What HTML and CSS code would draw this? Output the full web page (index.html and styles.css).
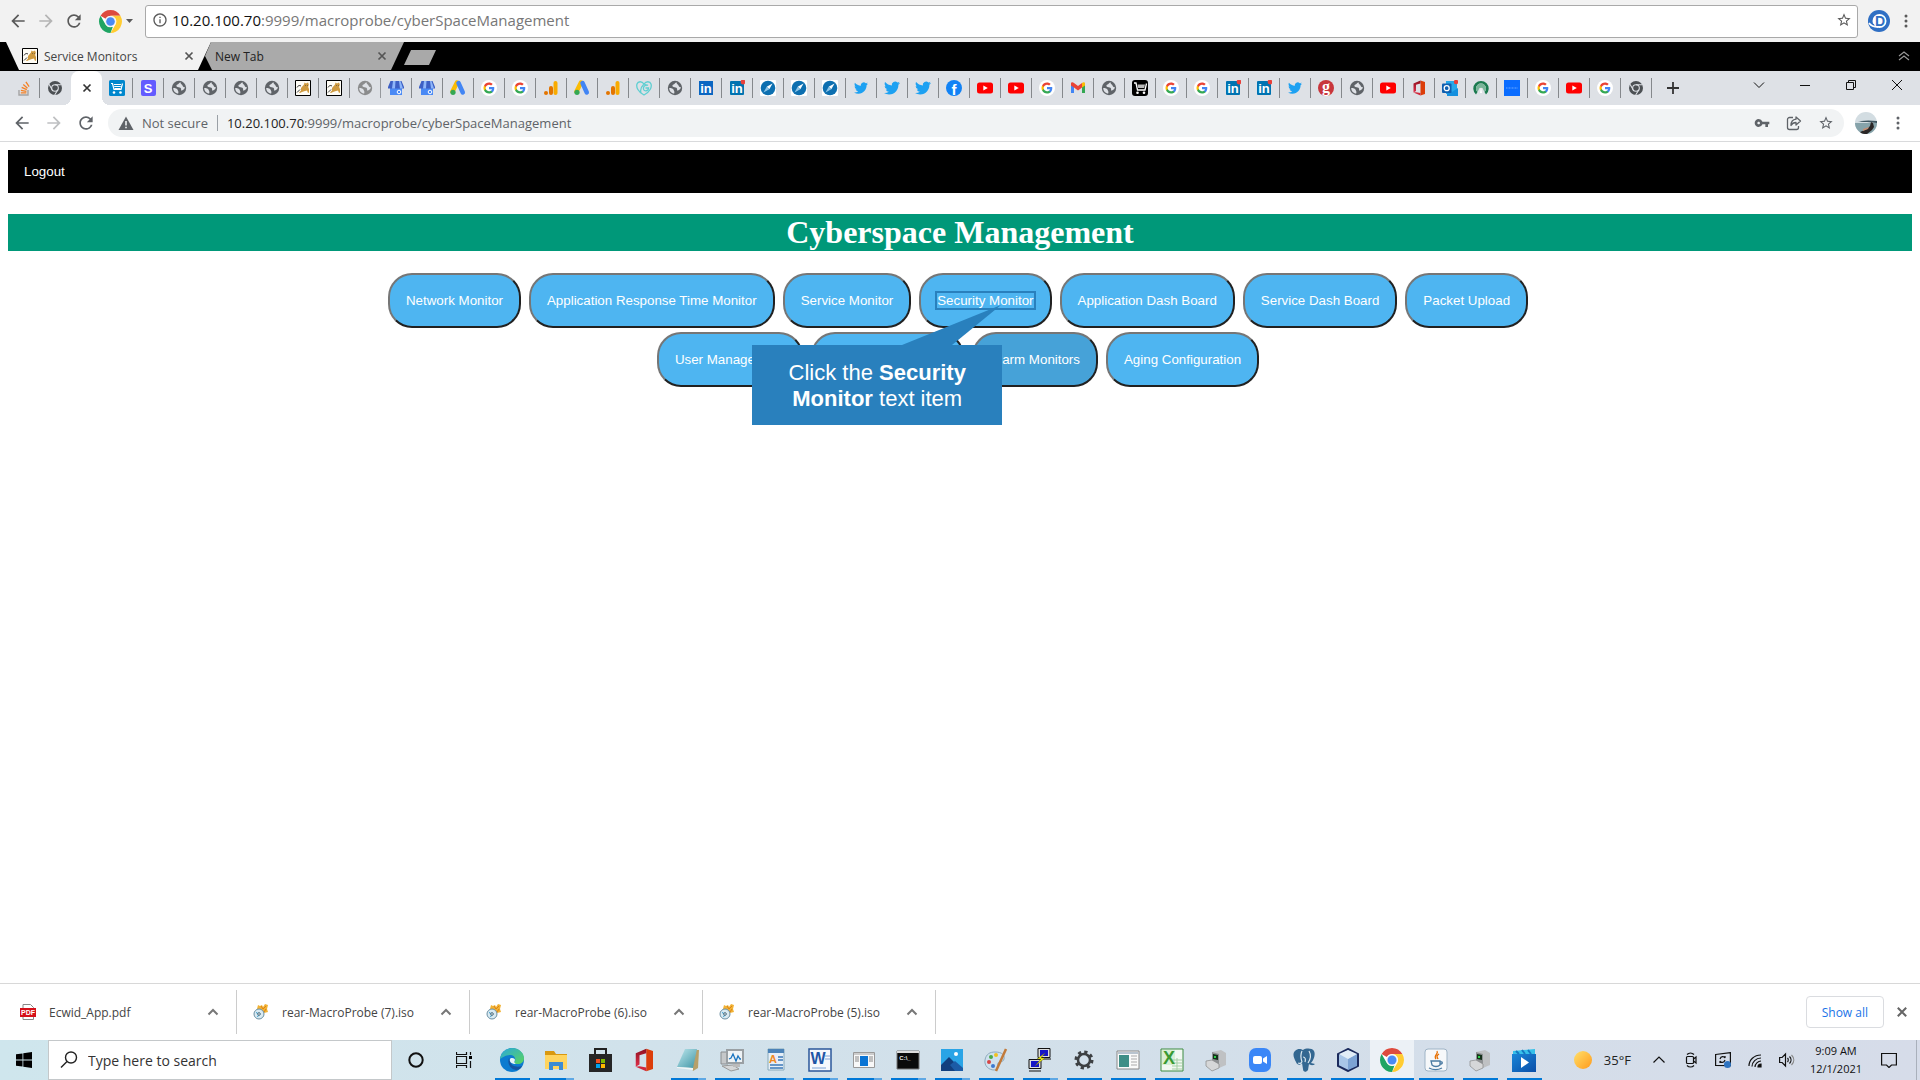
FILE: index.html
```
<!DOCTYPE html>
<html lang="en">
<head>
    <meta charset="UTF-8">
    <meta name="viewport" content="width=device-width, initial-scale=1.0">
    <title>Cyberspace Management</title>
    <link rel="stylesheet" href="styles.css">
</head>
<body>
    <!-- gradients -->
    <svg class="sprite" aria-hidden="true">
        <defs>
            <linearGradient id="g-edge" x1="0" y1="0" x2="1" y2="1"><stop offset="0" stop-color="#2aa7dd"/><stop offset="1" stop-color="#5bd65b"/></linearGradient>
            <linearGradient id="g-sun" x1="0" y1="0" x2="1" y2="1"><stop offset="0" stop-color="#ffe06a"/><stop offset="1" stop-color="#ff9a1c"/></linearGradient>
            <linearGradient id="g-office" x1="0" y1="0" x2="0" y2="1"><stop offset="0" stop-color="#8f1020"/><stop offset="1" stop-color="#e0304a"/></linearGradient>
            <linearGradient id="g-note" x1="0" y1="0" x2="1" y2="1"><stop offset="0" stop-color="#bfe8ee"/><stop offset="1" stop-color="#3f95a5"/></linearGradient>
            <linearGradient id="g-movie" x1="0" y1="0" x2="1" y2="1"><stop offset="0" stop-color="#1a86d8"/><stop offset="1" stop-color="#0a4ea8"/></linearGradient>
        </defs>
    </svg>
    <!-- shared icons -->
    <svg class="symbols" aria-hidden="true">
        <symbol id="i-back" viewBox="0 0 24 24"><path d="M20 11H7.83l5.59-5.59L12 4l-8 8 8 8 1.41-1.41L7.83 13H20v-2z"/></symbol>
        <symbol id="i-forward" viewBox="0 0 24 24"><path d="M12 4l-1.41 1.41L16.17 11H4v2h12.17l-5.58 5.59L12 20l8-8z"/></symbol>
        <symbol id="i-reload" viewBox="0 0 24 24"><path d="M17.65 6.35A7.958 7.958 0 0012 4c-4.42 0-7.99 3.58-7.99 8s3.57 8 7.99 8c3.73 0 6.84-2.55 7.73-6h-2.08A5.99 5.99 0 0112 18c-3.31 0-6-2.69-6-6s2.69-6 6-6c1.66 0 3.14.69 4.22 1.78L13 11h7V4l-2.35 2.35z"/></symbol>
        <symbol id="i-star" viewBox="0 0 24 24"><path d="M22 9.24l-7.19-.62L12 2 9.19 8.63 2 9.24l5.46 4.73L5.82 21 12 17.27 18.18 21l-1.63-7.03L22 9.24zM12 15.4l-3.76 2.27 1-4.28-3.32-2.88 4.38-.38L12 6.1l1.71 4.04 4.38.38-3.32 2.88 1 4.28L12 15.4z"/></symbol>
        <symbol id="i-info" viewBox="0 0 24 24"><path d="M11 7h2v2h-2zm0 4h2v6h-2zm1-9C6.48 2 2 6.48 2 12s4.480 10 10 10 10-4.480 10-10S17.520 2 12 2zm0 18c-4.410 0-8-3.590-8-8s3.590-8 8-8 8 3.590 8 8-3.590 8-8 8z"/></symbol>
        <symbol id="i-dots" viewBox="0 0 4 16"><circle cx="2" cy="3" r="1.500"/><circle cx="2" cy="8" r="1.500"/><circle cx="2" cy="13" r="1.500"/></symbol>
        <symbol id="i-close" viewBox="0 0 10 10"><path d="M1.500 1.500l7 7M8.500 1.500l-7 7" fill="none" stroke="currentColor" stroke-width="1.700"/></symbol>
        <symbol id="i-up" viewBox="0 0 12 12"><path d="M1.500 8.500L6 4l4.500 4.500" fill="none" stroke="currentColor" stroke-width="2"/></symbol>
        <symbol id="i-chrome" viewBox="0 0 24 24"><circle cx="12" cy="12" r="12" fill="#fff"/><path d="M12 0a12 12 0 0110.390 6H12a6 6 0 00-5.200 3L1.610 6A12 12 0 0112 0z" fill="#dd4b3e"/><path d="M22.390 6A12 12 0 0112 24l5.200-9A6 6 0 0012 6z" fill="#fc3"/><path d="M1.610 6L6.800 15A6 6 0 0012 18a6 6 0 002.500-.500L12 24A12 12 0 011.610 6z" fill="#1fa463"/><circle cx="12" cy="12" r="5.800" fill="#f4f4f4"/><circle cx="12" cy="12" r="4.500" fill="#4a8af4"/></symbol>
        <symbol id="i-chromegrey" viewBox="0 0 24 24"><circle cx="12" cy="12" r="10.500" fill="#4c5054"/><circle cx="12" cy="12" r="5" fill="none" stroke="#dee1e6" stroke-width="1.600"/><path d="M12 7h9.500M7.700 14.500L3 6.300M16.300 14.500L11.500 22.500" stroke="#dee1e6" stroke-width="1.600" fill="none"/></symbol>
        <symbol id="i-globe" viewBox="0 0 16 16"><circle cx="8" cy="8" r="7.200"/><path d="M9.500 2.200C8 2.500 8 4 6.500 4.500S5 6.500 6.500 7s3 0 3.500 1.500-.500 2 .500 2 3.500-1.500 3.300-3.500c-1.300.500-2-.500-2.300-1.500S9.500 4 9.500 2.200z" fill="#dee1e6"/><path d="M2.200 8c2 0 4 .500 4.500 2s1 1.500.500 3.600C4.500 13.500 2.200 11 2.200 8z" fill="#dee1e6"/></symbol>
        <symbol id="i-google" viewBox="0 0 32 32"><circle cx="16" cy="16" r="16" fill="#fff"/><g transform="translate(4 4)"><path d="M22.560 12.250c0-.780-.070-1.530-.200-2.250H12v4.260h5.920c-.260 1.370-1.040 2.530-2.210 3.310v2.770h3.570c2.080-1.920 3.280-4.740 3.280-8.090z" fill="#4285f4"/><path d="M12 23c2.970 0 5.460-.980 7.280-2.660l-3.570-2.770c-.980.660-2.230 1.060-3.710 1.060-2.860 0-5.290-1.930-6.160-4.530H2.180v2.840C3.990 20.530 7.700 23 12 23z" fill="#34a853"/><path d="M5.840 14.090c-.220-.660-.350-1.360-.350-2.090s.130-1.430.350-2.090V7.070H2.180C1.430 8.550 1 10.220 1 12s.430 3.450 1.180 4.930l2.850-2.220.810-.620z" fill="#fbbc05"/><path d="M12 5.380c1.620 0 3.060.560 4.210 1.640l3.150-3.150C17.450 2.090 14.970 1 12 1 7.700 1 3.990 3.470 2.180 7.070l3.660 2.840c.870-2.600 3.300-4.530 6.160-4.530z" fill="#ea4335"/></g></symbol>
        <symbol id="i-twitter" viewBox="0 0 24 24"><path fill="#1da1f2" d="M23.953 4.570a10 10 0 01-2.825.775 4.958 4.958 0 002.163-2.723c-.951.555-2.005.959-3.127 1.184a4.920 4.920 0 00-8.384 4.482C7.690 8.095 4.067 6.130 1.640 3.162a4.822 4.822 0 00-.666 2.475c0 1.710.870 3.213 2.188 4.096a4.904 4.904 0 01-2.228-.616v.060a4.923 4.923 0 003.946 4.827 4.996 4.996 0 01-2.212.085 4.936 4.936 0 004.604 3.417 9.867 9.867 0 01-6.102 2.105c-.390 0-.779-.023-1.170-.067a13.995 13.995 0 007.557 2.209c9.053 0 13.998-7.496 13.998-13.985 0-.210 0-.420-.015-.630A9.935 9.935 0 0024 4.590z"/></symbol>
        <symbol id="i-stack" viewBox="0 0 16 16"><path d="M3 10v5h9v-5" fill="none" stroke="#a5a4a4" stroke-width="1.400"/><path d="M4.800 12.800h5.600M4.900 10.300l5.500 1M5.700 7.400l5.100 2.300M7.300 4.600l4.200 3.600M9.900 1.800l3.200 4.800" stroke="#f48024" stroke-width="1.300"/></symbol>
        <symbol id="i-cartblue" viewBox="0 0 16 16"><rect width="16" height="16" rx="1.500" fill="#0087cd"/><path d="M2 3.500h1.500l1.500 6h7l1.500-6" fill="none" stroke="#fff" stroke-width="1.200"/><path d="M5 4h7v1H5zM5.200 6h6.600v1H5.200zM5.500 8h6v1h-6z" fill="#fff"/><circle cx="5" cy="12.500" r="1.300" fill="#fff"/><circle cx="11.500" cy="12.500" r="1.300" fill="#fff"/></symbol>
        <symbol id="i-cartblack" viewBox="0 0 16 16"><rect width="16" height="16" rx="3" fill="#000"/><path d="M2 3h2l1.500 7H13l1.500-6.500" fill="none" stroke="#fff" stroke-width="1.300"/><path d="M5.500 4.500H13l-.800 3.500H6.200z" fill="#bbb"/><circle cx="5.500" cy="12.700" r="1.300" fill="#fff"/><circle cx="12" cy="12.700" r="1.300" fill="#fff"/></symbol>
        <symbol id="i-stripe" viewBox="0 0 16 16"><rect x="1" width="15" height="16" rx="2" fill="#635bff"/><text x="8" y="13" class="mark" font-size="13" fill="#fff">S</text></symbol>
        <symbol id="i-tomcat" viewBox="0 0 16 16"><path d="M.500.500h15v15H.500z" fill="#fffdf6" stroke="#000"/><path d="M9 4.500l.500-2 1.500 1 2-1 .800 2-.600 2.500.800 2v3.500l-1 .500-1-2.500-2 .500-3 1-2 1-1-.500 2-2L6 8z" fill="#cf9a3f"/><path d="M2 7.500c1-2 2.500-2.500 4-1.500M2 12.500l3-3M10 5.500h.500M12 5.500h.500" stroke="#3b3b3b" fill="none"/></symbol>
        <symbol id="i-store" viewBox="0 0 16 16"><path d="M2 7h12v8H2z" fill="#4989f5"/><path d="M2.500 1h11L16 7v1.500H0V7z" fill="#3c5fc4"/><path d="M5 1h2.500L7 8.500H4zM11 1h1.500L15 8.500h-3z" fill="#8eb6f9"/><circle cx="11" cy="12" r="1.800" fill="none" stroke="#fff"/></symbol>
        <symbol id="i-ads" viewBox="0 0 16 16"><path d="M7 2.500L2.500 11.500" stroke="#fbbc04" stroke-width="4.500" stroke-linecap="round"/><path d="M8.500 3l4.300 9.500" stroke="#4285f4" stroke-width="4.500" stroke-linecap="round"/><circle cx="3" cy="12.300" r="2.600" fill="#34a853"/></symbol>
        <symbol id="i-analytics" viewBox="0 0 16 16"><rect x="10.500" y="1" width="4" height="14" rx="2" fill="#f9ab00"/><rect x="6" y="6" width="4" height="9" rx="2" fill="#e37400"/><circle cx="3" cy="13" r="2" fill="#e37400"/></symbol>
        <symbol id="i-godaddy" viewBox="0 0 16 16"><path d="M8 4C6 1 2 1 1 4s1 8 7 11c6-3 8-8 7-11S10 1 8 4zM8 4C5 7 4 10 5 13M9.500 8h3c0 3-4.500 4-5 1s3-5 4.500-3.500M8 4c2 1 1 0 2.500 2" fill="none" stroke="#5fcfd2" stroke-width="1.300"/></symbol>
        <symbol id="i-linkedin" viewBox="0 0 16 16"><rect x="1" y="1" width="14" height="14" fill="#0a66c2"/><text x="8" y="13" class="mark" font-size="13" fill="#fff">in</text></symbol>
        <symbol id="i-linkedindot" viewBox="0 0 16 16"><rect x="1" y="1" width="14" height="14" rx="1" fill="#0073b1"/><text x="8" y="13" class="mark" font-size="13" fill="#fff">in</text><circle cx="14" cy="2" r="2.400" fill="#e8403a"/></symbol>
        <symbol id="i-compass" viewBox="0 0 16 16"><rect width="16" height="16" rx="1" fill="#fff"/><circle cx="8" cy="8" r="7.300" fill="#0d6fb0"/><path d="M12.500 3.500L9.300 9.300 6.700 6.700z" fill="#fff"/><path d="M3.500 12.500l3.200-5.800 2.600 2.600z" fill="#8ec5e8"/></symbol>
        <symbol id="i-facebook" viewBox="0 0 16 16"><circle cx="8" cy="8" r="8" fill="#1182f5"/><text x="8" y="15" class="mark" font-size="15" fill="#fff">f</text></symbol>
        <symbol id="i-youtube" viewBox="0 0 16 16"><rect y="2.500" width="16" height="11" rx="2.500" fill="#f00"/><path d="M6.300 5.500v5l4.500-2.500z" fill="#fff"/></symbol>
        <symbol id="i-gmail" viewBox="0 0 16 16"><path d="M1 3.500V13h3V6z" fill="#4285f4"/><path d="M15 3.500V13h-3V6z" fill="#34a853"/><path d="M1 3.500c0-1.500 2-1.500 3-.500l4 3 4-3v4.500l-4 3-4-3-3-2z" fill="#ea4335"/><path d="M12 3c1-1 3-1 3 .500v2l-3 2z" fill="#fbbc04"/></symbol>
        <symbol id="i-redg" viewBox="0 0 16 16"><circle cx="8" cy="8" r="8" fill="#c8363c"/><text x="8" y="12" class="mark mark-serif" font-size="16" fill="#fff">g</text></symbol>
        <symbol id="i-office" viewBox="0 0 16 16"><path d="M9.500.500L14 2v12l-4.500 1.500z" fill="#dc3e0b"/><path d="M9.500.500L2.500 3.500v9L5 11V4.800l4.500-1.300z" fill="url(#g-office)"/><path d="M2.500 12.500l7 3V13L5 12.200z" fill="#d0283c"/></symbol>
        <symbol id="i-outlook" viewBox="0 0 16 16"><rect x="4" y="1" width="11" height="13" fill="#28a8ea"/><path d="M5 8l5 4 6-4v8H5z" fill="#1490df"/><rect x="0" y="3.500" width="9.500" height="9.500" rx="1" fill="#0f5fb0"/><circle cx="4.700" cy="8.200" r="2.500" fill="none" stroke="#fff" stroke-width="1.300"/><circle cx="14" cy="2" r="2.200" fill="#e8403a"/></symbol>
        <symbol id="i-gauge" viewBox="0 0 16 16"><path d="M3 14.500A7.700 7.700 0 1113 14.500L11.500 12a5 5 0 10-7 0z" fill="#1b7a4f"/><path d="M4.500 12a5 5 0 117 0L9.500 8H6.500z" fill="#79b598"/><path d="M8 7l1 6H7z" fill="#fff"/></symbol>
        <symbol id="i-bluebox" viewBox="0 0 16 16"><path d="M0 0h16v16H0z" fill="#0a6cff"/><path d="M2 8h12" stroke="#6aa6ff" stroke-dasharray="1 .500"/></symbol>
        <symbol id="i-pdf" viewBox="0 0 16 16"><path d="M3 .500h7.500L13.500 3.500v12H3z" fill="#fff" stroke="#888"/><rect y="4" width="16" height="9" fill="#d5101a"/><text x="8" y="11" class="mark" font-size="7" fill="#fff">PDF</text></symbol>
        <symbol id="i-iso" viewBox="0 0 16 16"><path d="M4 5l1-4 2 1 2-1 1 2 2-3 3 1-1 4 1 3-4 1-1 4-3-1z" fill="#f2b233"/><path d="M8 2l2 3 3-3M11 8l2-3" stroke="#d9821a" fill="none"/><circle cx="6" cy="10" r="5" fill="#d9eaf2" stroke="#6b8fa3"/><path d="M3 8.500l3 1.500-1.500 3" stroke="#2f9bd0" fill="none"/><circle cx="6" cy="10" r="1.300" fill="#fff" stroke="#467"/></symbol>
    </svg>

    <!-- outer browser bar -->
    <div class="bar bar-top">
        <div class="nav-btns nav-small">
            <button aria-label="Back"><svg><use href="#i-back"/></svg></button>
            <button aria-label="Forward" class="off"><svg><use href="#i-forward"/></svg></button>
            <button aria-label="Reload"><svg><use href="#i-reload"/></svg></button>
        </div>
        <button class="launcher" aria-label="Chrome">
            <svg class="chrome-logo"><use href="#i-chrome"/></svg>
            <svg class="caret" viewBox="0 0 7 4"><path d="M0 0h7L3.500 4z"/></svg>
        </button>
        <div class="address">
            <svg class="ico16"><use href="#i-info"/></svg>
            <label for="outerUrl">10.20.100.70</label>
            <input type="text" id="outerUrl" value=":9999/macroprobe/cyberSpaceManagement">
            <button aria-label="Bookmark"><svg class="ico16"><use href="#i-star"/></svg></button>
        </div>
        <svg class="d-logo" viewBox="0 0 22 22"><circle cx="11" cy="11" r="11" fill="#2f6fc4"/><circle cx="11.500" cy="11" r="7" fill="#fff"/><path d="M0 12l6 2 1 4-4 1z" fill="#2f6fc4"/><path d="M1 13c2 3 5 4 9 4" stroke="#fff" stroke-width="1.500" fill="none"/><text x="12" y="16" class="mark d-mark" fill="#2f6fc4">D</text></svg>
        <button class="menu" aria-label="Menu"><svg><use href="#i-dots"/></svg></button>
    </div>

    <div class="outer-tabs">
        <div class="outer-tab selected">
            <svg class="ico16"><use href="#i-tomcat"/></svg>
            <span>Service Monitors</span>
            <button aria-label="Close tab"><svg class="ico10"><use href="#i-close"/></svg></button>
        </div>
        <div class="outer-tab second">
            <span>New Tab</span>
            <button aria-label="Close tab"><svg class="ico10"><use href="#i-close"/></svg></button>
        </div>
        <button class="new-tab" aria-label="New tab"></button>
        <button class="collapse" aria-label="Collapse"><svg viewBox="0 0 12 10"><path d="M1 5l5-4 5 4M1 9l5-4 5 4" fill="none" stroke="#999" stroke-width="1.200"/></svg></button>
    </div>

    <!-- inner browser tabs -->
    <div class="tab-strip">
        <button class="tab"><svg><use href="#i-stack"/></svg></button>
        <button class="tab no-line"><svg><use href="#i-chromegrey"/></svg></button>
        <button class="tab active" aria-label="Close tab"><svg class="ico10"><use href="#i-close"/></svg></button>
        <button class="tab"><svg><use href="#i-cartblue"/></svg></button>
        <button class="tab"><svg><use href="#i-stripe"/></svg></button>
        <button class="tab"><svg><use href="#i-globe"/></svg></button>
        <button class="tab"><svg><use href="#i-globe"/></svg></button>
        <button class="tab"><svg><use href="#i-globe"/></svg></button>
        <button class="tab"><svg><use href="#i-globe"/></svg></button>
        <button class="tab"><svg><use href="#i-tomcat"/></svg></button>
        <button class="tab"><svg><use href="#i-tomcat"/></svg></button>
        <button class="tab faded"><svg><use href="#i-globe"/></svg></button>
        <button class="tab"><svg><use href="#i-store"/></svg></button>
        <button class="tab"><svg><use href="#i-store"/></svg></button>
        <button class="tab"><svg><use href="#i-ads"/></svg></button>
        <button class="tab"><svg><use href="#i-google"/></svg></button>
        <button class="tab"><svg><use href="#i-google"/></svg></button>
        <button class="tab"><svg><use href="#i-analytics"/></svg></button>
        <button class="tab"><svg><use href="#i-ads"/></svg></button>
        <button class="tab"><svg><use href="#i-analytics"/></svg></button>
        <button class="tab"><svg><use href="#i-godaddy"/></svg></button>
        <button class="tab"><svg><use href="#i-globe"/></svg></button>
        <button class="tab"><svg><use href="#i-linkedin"/></svg></button>
        <button class="tab"><svg><use href="#i-linkedindot"/></svg></button>
        <button class="tab"><svg><use href="#i-compass"/></svg></button>
        <button class="tab"><svg><use href="#i-compass"/></svg></button>
        <button class="tab"><svg><use href="#i-compass"/></svg></button>
        <button class="tab small"><svg><use href="#i-twitter"/></svg></button>
        <button class="tab"><svg><use href="#i-twitter"/></svg></button>
        <button class="tab"><svg><use href="#i-twitter"/></svg></button>
        <button class="tab"><svg><use href="#i-facebook"/></svg></button>
        <button class="tab"><svg><use href="#i-youtube"/></svg></button>
        <button class="tab"><svg><use href="#i-youtube"/></svg></button>
        <button class="tab"><svg><use href="#i-google"/></svg></button>
        <button class="tab"><svg><use href="#i-gmail"/></svg></button>
        <button class="tab"><svg><use href="#i-globe"/></svg></button>
        <button class="tab"><svg><use href="#i-cartblack"/></svg></button>
        <button class="tab"><svg><use href="#i-google"/></svg></button>
        <button class="tab"><svg><use href="#i-google"/></svg></button>
        <button class="tab"><svg><use href="#i-linkedindot"/></svg></button>
        <button class="tab"><svg><use href="#i-linkedindot"/></svg></button>
        <button class="tab small"><svg><use href="#i-twitter"/></svg></button>
        <button class="tab"><svg><use href="#i-redg"/></svg></button>
        <button class="tab"><svg><use href="#i-globe"/></svg></button>
        <button class="tab"><svg><use href="#i-youtube"/></svg></button>
        <button class="tab"><svg><use href="#i-office"/></svg></button>
        <button class="tab"><svg><use href="#i-outlook"/></svg></button>
        <button class="tab"><svg><use href="#i-gauge"/></svg></button>
        <button class="tab"><svg><use href="#i-bluebox"/></svg></button>
        <button class="tab"><svg><use href="#i-google"/></svg></button>
        <button class="tab"><svg><use href="#i-youtube"/></svg></button>
        <button class="tab"><svg><use href="#i-google"/></svg></button>
        <button class="tab"><svg><use href="#i-chromegrey"/></svg></button>
        <button class="add-tab" aria-label="New tab"><svg viewBox="0 0 12 12"><path d="M6 0v12M0 6h12" stroke="#333" stroke-width="1.800"/></svg></button>
        <div class="win-btns">
            <button aria-label="Search tabs"><svg viewBox="0 0 12 12"><path d="M1 3.500l5 5 5-5"/></svg></button>
            <button aria-label="Minimize"><svg viewBox="0 0 12 12"><path d="M1 6.500h10"/></svg></button>
            <button aria-label="Restore"><svg viewBox="0 0 12 12"><path d="M1.500 3.500h7v7h-7zM3.500 3V1.500h7v7H9"/></svg></button>
            <button aria-label="Close"><svg viewBox="0 0 12 12"><path d="M1 1l10 10M11 1L1 11"/></svg></button>
        </div>
    </div>

    <div class="bar bar-inner">
        <div class="nav-btns">
            <button aria-label="Back"><svg><use href="#i-back"/></svg></button>
            <button aria-label="Forward" class="off"><svg><use href="#i-forward"/></svg></button>
            <button aria-label="Reload"><svg><use href="#i-reload"/></svg></button>
        </div>
        <div class="omnibox">
            <svg class="ico16" viewBox="0 0 16 16"><path d="M8 1.500L15.500 15H.500z"/><path d="M7.200 6h1.600v4.500H7.200zM7.200 11.700h1.600v1.600H7.200z" fill="#f1f3f4"/></svg>
            <span class="secure">Not secure</span>
            <label for="innerUrl">10.20.100.70</label>
            <input type="text" id="innerUrl" value=":9999/macroprobe/cyberSpaceManagement">
            <button aria-label="Passwords"><svg class="ico16" viewBox="0 0 24 24"><path d="M12.650 10A5.990 5.990 0 007 6c-3.310 0-6 2.690-6 6s2.690 6 6 6a5.990 5.990 0 005.650-4H17v4h4v-4h2v-4H12.650zM7 14c-1.100 0-2-.900-2-2s.900-2 2-2 2 .900 2 2-.900 2-2 2z"/></svg></button>
            <button aria-label="Share"><svg class="ico16" viewBox="0 0 16 16"><path d="M7 2.500H3.500a2 2 0 00-2 2v8a2 2 0 002 2h7a2 2 0 002-2V11M10 2l4.500 4L10 10V7.500c-2.500 0-4 1-5 3 0-3.500 2-6 5-6.300z" fill="none" stroke="#5f6368" stroke-width="1.300" stroke-linejoin="round"/></svg></button>
            <button aria-label="Bookmark"><svg class="ico16"><use href="#i-star"/></svg></button>
        </div>
        <button class="avatar" aria-label="Profile"><svg viewBox="0 0 22 22"><circle cx="11" cy="11" r="11" fill="#d3dde2"/><path d="M0 11h22a11 11 0 01-22 0z" fill="#86a3aa"/><path d="M0 11c4-2 8-1 12-1l10 1V9C14 8 6 8 0 11z" fill="#3e5560"/><path d="M5 20l7-3 3-3 1-4 2 1 1 4-2 3-5 4c-3 0-5 0-7-2z" fill="#2a2626"/><path d="M8 17l6-2-1 2-5 2z" fill="#c28e73"/></svg></button>
        <button class="menu" aria-label="Menu"><svg><use href="#i-dots"/></svg></button>
    </div>

    <!-- page -->
    <main class="page">
        <div class="topnav">
            <button class="logout">Logout</button>
        </div>
        <h1>Cyberspace Management</h1>
        <div class="monitors">
            <button class="button">Network Monitor</button>
            <button class="button">Application Response Time Monitor</button>
            <button class="button">Service Monitor</button>
            <div class="step">
                <button class="button"><span class="target">Security Monitor</span></button>
                <div class="callout">
                    <svg class="pointer" viewBox="0 0 250 40"><path d="M150 40L249 0l-49 40z"/></svg>
                    <p>Click the <b>Security Monitor</b> text item</p>
                </div>
            </div>
            <button class="button">Application Dash Board</button>
            <button class="button">Service Dash Board</button>
            <button class="button">Packet Upload</button>
            <button class="button">User Management</button>
            <button class="button">Alarm Configuration</button>
            <button class="button hovered">Alarm Monitors</button>
            <button class="button">Aging Configuration</button>
        </div>
    </main>

    <!-- downloads -->
    <div class="downloads">
        <div class="download"><svg class="ico16"><use href="#i-pdf"/></svg><span>Ecwid_App.pdf</span><button aria-label="Options"><svg><use href="#i-up"/></svg></button></div>
        <div class="download"><svg class="ico16"><use href="#i-iso"/></svg><span>rear-MacroProbe (7).iso</span><button aria-label="Options"><svg><use href="#i-up"/></svg></button></div>
        <div class="download"><svg class="ico16"><use href="#i-iso"/></svg><span>rear-MacroProbe (6).iso</span><button aria-label="Options"><svg><use href="#i-up"/></svg></button></div>
        <div class="download"><svg class="ico16"><use href="#i-iso"/></svg><span>rear-MacroProbe (5).iso</span><button aria-label="Options"><svg><use href="#i-up"/></svg></button></div>
        <button class="show-all">Show all</button>
        <button class="close-downloads" aria-label="Close"><svg viewBox="0 0 10 10"><use href="#i-close"/></svg></button>
    </div>

    <!-- taskbar -->
    <div class="taskbar">
        <button class="start" aria-label="Start"><svg viewBox="0 0 16 16"><path d="M0 2.300l6.500-.900v6.200H0zM7.300 1.300L16 0v7.600H7.300zM0 8.400h6.500v6.200L0 13.700zM7.300 8.400H16V16l-8.700-1.300z"/></svg></button>
        <div class="search">
            <svg viewBox="0 0 18 18"><circle cx="11" cy="6.500" r="5.500"/><path d="M7 10.500L1 16.500"/></svg>
            <input type="text" aria-label="Search" placeholder="Type here to search">
        </div>
        <button class="sys" aria-label="Cortana"><svg viewBox="0 0 16 16"><circle cx="8" cy="8" r="6.700" fill="none" stroke="#111" stroke-width="2"/></svg></button>
        <button class="sys" aria-label="Task view"><svg viewBox="0 0 16 16"><path d="M.500 0v2.500h10V0M.500 4.500h10v7H.500zM.500 16v-2.500h10V16M14.500 0v3M14.500 9v7" fill="none" stroke="#111" stroke-width="1.200"/><path d="M13 4h3v3h-3z"/></svg></button>
        <div class="apps">
            <button class="app run"><svg viewBox="0 0 24 24"><circle cx="12" cy="12" r="12" fill="#0c7bd0"/><path d="M0 11C1 4 6 0 12 0c7 0 12 5 12 10 0 4-3 6-6 6-4 0-5-1-3-3 1-3-1-6-5-6-5 0-8 3-10 4z" fill="url(#g-edge)"/><path d="M9 10c-2 5 1 11 7 12 3 0 5-2 6-4-3 1-7 1-10-1-2-2-2-5-3-7z" fill="#1554a0"/><path d="M10 11c1-2 5-1 5 1-1 2-1 3 1 4-4 0-7-2-6-5z" fill="#e5f3f8"/></svg></button>
            <button class="app run many"><svg viewBox="0 0 24 24"><path d="M1 3h9l2 3h11v4H1z" fill="#d9980f"/><path d="M1 7h22v14H1z" fill="#ffd45e"/><path d="M5 14h14v8h-4v-4H9v4H5z" fill="#3c8cd4"/></svg></button>
            <button class="app"><svg viewBox="0 0 24 24"><path d="M7 7V1h11v6" fill="none" stroke="#222" stroke-width="2"/><path d="M1 6h23v18H1z" fill="#262626"/><path d="M8 11h4v4H8z" fill="#f25022"/><path d="M13 11h4v4h-4z" fill="#7fba00"/><path d="M8 16h4v4H8z" fill="#00a4ef"/><path d="M13 16h4v4h-4z" fill="#ffb900"/></svg></button>
            <button class="app"><svg viewBox="0 0 16 16"><use href="#i-office"/></svg></button>
            <button class="app run many"><svg viewBox="0 0 24 24"><path d="M9 2h14l-1 18-5 3z" fill="#b7a069"/><path d="M9 1h12l-4 19L1 19z" fill="url(#g-note)"/><path d="M1 19l16 1v2L1 20z" fill="#f2f6f6"/></svg></button>
            <button class="app run"><svg viewBox="0 0 24 24"><path d="M1 4h7v12H1z" fill="#c5c8ca" stroke="#8a8d90"/><path d="M7 2h16v13H7z" fill="#eef3f6" stroke="#9aa0a4" stroke-width="2"/><path d="M9 11l2-1 2-4 3 7 2-5 2 3h1" fill="none" stroke="#1b75c0" stroke-width="1.300"/><path d="M2 18l11-1 6 4-8 2z" fill="#d5d7d8" stroke="#999"/><path d="M13 16h7v3h-7z" fill="#bbb"/></svg></button>
            <button class="app run many"><svg viewBox="0 0 24 24"><path d="M4 1h16v21H4z" fill="#e6eff8" stroke="#8ab"/><path d="M4 1h16v4H4z" fill="#4c83b8"/><path d="M14 9h5M14 12h5M6 17h13M6 20h13" stroke="#3d7ab8" stroke-width="1.500"/><text x="9" y="15" class="mark" font-size="11" fill="#f08a24">A</text></svg></button>
            <button class="app run many"><svg viewBox="0 0 24 24"><path d="M1 1h22v22H1z" fill="#f5f8fc" stroke="#2b579a" stroke-width="1.500"/><path d="M17 8h5M17 11h5M4 20h14" stroke="#7fa4d6"/><text x="10" y="16" class="mark" font-size="16" fill="#1f55a5">W</text></svg></button>
            <button class="app run many"><svg viewBox="0 0 24 24"><path d="M1.500 4.500h21v15h-21z" fill="#f8f8f8" stroke="#999"/><path d="M2 5h20v2H2z" fill="#ccc"/><path d="M8 8h8v10H8z" fill="#0a74d4"/><path d="M3 9h4M3 11h4M3 13h4M17 9h4M17 11h4M17 13h4" stroke="#888"/></svg></button>
            <button class="app run many"><svg viewBox="0 0 24 24"><path d="M1 3h22v18H1z" fill="#0a0a0a" stroke="#777"/><path d="M1 3h22v2H1z" fill="#ddd"/><text x="9" y="12" class="mark" font-size="6" fill="#eee">C:\_</text></svg></button>
            <button class="app run many"><svg viewBox="0 0 24 24"><path d="M1 1h22v22H1z" fill="#2aa4e6"/><path d="M1 17l8-8 14 14H1z" fill="#123f7e"/><path d="M10 17l5-4 8 7v3H15z" fill="#1c5ba6"/><circle cx="16" cy="6" r="2" fill="#fff"/></svg></button>
            <button class="app run"><svg viewBox="0 0 24 24"><path d="M11 4c7 0 10 3 9 7s-5 2-6 4 1 7-4 7S0 18 1 12s5-8 10-8z" fill="#cfe1ee" stroke="#8ca9bd"/><circle cx="7" cy="9" r="2" fill="#4aa84a"/><circle cx="12" cy="7" r="2" fill="#f0c020"/><circle cx="5" cy="14" r="2" fill="#d64545"/><circle cx="9" cy="18" r="2" fill="#3d7ad0"/><path d="M22 1L12 23" stroke="#c27a3a" stroke-width="2.500"/></svg></button>
            <button class="app run many"><svg viewBox="0 0 24 24"><path d="M11 1h10v8H11zM2 12h10v8H2z" fill="#1414c8" stroke="#ddd" stroke-width="2"/><path d="M10 .500h12v9H10zM1 11.500h12v9H1zM11 11h12M1 23h12" fill="none" stroke="#111"/><path d="M17 5l-8 6h4l-6 7 10-8h-4z" fill="#ff0" stroke="#554" stroke-width=".500"/></svg></button>
            <button class="app run"><svg viewBox="0 0 24 24"><circle cx="12" cy="12" r="6" fill="none" stroke="#3d4043" stroke-width="2.500"/><circle cx="12" cy="12" r="8" fill="none" stroke="#3d4043" stroke-width="3" stroke-dasharray="3.200 3.083"/></svg></button>
            <button class="app run"><svg viewBox="0 0 24 24"><path d="M1 3h22v18H1z" fill="#fafafa" stroke="#888"/><path d="M2 4h20v2H2z" fill="#b9c4cf"/><path d="M3 7h10v12H3z" fill="#3f8e86"/><path d="M15 8h6M15 11h6M15 14h6M15 17h6" stroke="#aaa"/></svg></button>
            <button class="app run"><svg viewBox="0 0 24 24"><path d="M1 1h22v22H1z" fill="#f2f8f2" stroke="#3d8b40"/><path d="M2 2h13v15H2z" fill="#d8efd4"/><path d="M12 12h10M12 15h10M12 18h10M12 21h10M17 10v12" stroke="#a5cfa5"/><text x="9" y="16" class="mark" font-size="18" fill="#3a9a32">X</text></svg></button>
            <button class="app run"><svg viewBox="0 0 24 24"><path d="M8 4l9-2 5 3v12l-7 3-7-2z" fill="#bfc1c3"/><path d="M8 4l7 2v14l-7-2z" fill="#8e9193"/><path d="M9 6l5 1v5l-5-1z" fill="#15301a"/><path d="M10 8h2v2h-2z" fill="#2ed04a"/><path d="M2 13l6-1 7 4v4l-7 3-6-5z" fill="#d6d7d8" stroke="#888" stroke-width=".700"/></svg></button>
            <button class="app run"><svg viewBox="0 0 24 24"><rect x="1" width="22" height="24" rx="7" fill="#3b87f7"/><rect x="5" y="8" width="9" height="8" rx="2" fill="#fff"/><path d="M15 10.500L19 8v8l-4-2.500z" fill="#fff"/></svg></button>
            <button class="app run"><svg viewBox="0 0 24 24"><path d="M3 3c3-3 6-2 8-1 3-2 9-2 11 1 2 4-1 10-3 12l4 1c-2 2-5 1-6 0l-1 6c-2 3-5 2-5-1l-1-6c-2 3-5 2-6-1C2 10 0 6 3 3z" fill="#336791"/><path d="M10 3c-2 4-1 8 0 11M17 3c3 5 1 9-1 12M11 9c2 0 3 2 2 5M6 15c2 1 4 0 4-2" fill="none" stroke="#dce8f0" stroke-width="1.200"/></svg></button>
            <button class="app run"><svg viewBox="0 0 24 24"><path d="M12 1l10 5v12l-10 5-10-5V6z" fill="#a9c6e8" stroke="#1b2a5c" stroke-width="2"/><path d="M12 11l9-5v12l-9 4z" fill="#7da3d4"/><path d="M3 6l9-4 9 4-9 5z" fill="#e2edf7"/></svg></button>
            <button class="app run current"><svg viewBox="0 0 24 24"><use href="#i-chrome"/></svg></button>
            <button class="app run"><svg viewBox="0 0 24 24"><rect x="1" y="1" width="22" height="22" rx="3" fill="#f6f8fa" stroke="#9fb4c6"/><path d="M13 3c2 3-4 4-1 8M15 6c-3 2-2 3-1 5" fill="none" stroke="#e76f00" stroke-width="1.300"/><path d="M7 13h9v4c-2 2-6 2-8 0zM16 14c3-1 3 2 0 2M5 20c4 2 9 2 13 0" fill="none" stroke="#4b7ba3" stroke-width="1.300"/></svg></button>
            <button class="app run"><svg viewBox="0 0 24 24"><path d="M8 4l9-2 5 3v12l-7 3-7-2z" fill="#bfc1c3"/><path d="M8 4l7 2v14l-7-2z" fill="#8e9193"/><path d="M9 6l5 1v5l-5-1z" fill="#15301a"/><path d="M10 8h2v2h-2z" fill="#2ed04a"/><path d="M2 13l6-1 7 4v4l-7 3-6-5z" fill="#d6d7d8" stroke="#888" stroke-width=".700"/></svg></button>
            <button class="app run"><svg viewBox="0 0 24 24"><path d="M1 3l22-2v5H1z" fill="#35c0ea"/><path d="M4 3l3 3M10 2l3 4M16 2l3 4" stroke="#1578c2" stroke-width="2"/><path d="M0 6h24v18H0z" fill="url(#g-movie)"/><path d="M9 9v11l8-5.500z" fill="#fff"/></svg></button>
        </div>
        <div class="tray">
            <button class="weather"><svg viewBox="0 0 18 18"><circle cx="9" cy="9" r="9" fill="url(#g-sun)"/></svg><span>35°F</span></button>
            <button class="tray-btn" aria-label="Show hidden icons"><svg viewBox="0 0 16 16"><path d="M2.500 10.500L8 5l5.500 5.500"/></svg></button>
            <button class="tray-btn" aria-label="Meet now"><svg viewBox="0 0 16 16"><rect x="3.500" y="4.500" width="7" height="7" rx="1"/><path d="M10.500 7l2.500-2v6l-2.500-2M4 2.500C6 .500 9 .500 11 2.500M4 13.500c2 2 5 2 7 0"/></svg></button>
            <button class="tray-btn" aria-label="Updates"><svg viewBox="0 0 16 16"><path d="M.600 2.500L15.400.600v13L.600 13.400z"/><path d="M5 7c1-3 4-3 5-1V4M10 8c-1 3-4 3-5 1v2"/><circle cx="12.500" cy="12.500" r="3.500" fill="#2f74c0" stroke="none"/></svg></button>
            <button class="tray-btn" aria-label="Network"><svg viewBox="0 0 16 16"><path d="M2 14C2 8 7 3 14 3M5 14.500C5 10 9 6 14 6M8 15c0-3 3-6 6-6"/><path d="M11 15a3 3 0 013-3v3z" fill="#111"/></svg></button>
            <button class="tray-btn" aria-label="Volume"><svg viewBox="0 0 16 16"><path d="M.600 5.500h2.500L6.500 2v12L3.100 10.500H.600zM8.500 6c1 1 1 3 0 4M10.500 4.500c2 2 2 5 0 7"/><path d="M12.500 3c3 3 3 7 0 10" stroke="#888"/></svg></button>
            <button class="clock"><span>9:09 AM</span><span>12/1/2021</span></button>
            <button class="tray-btn notes" aria-label="Notifications"><svg viewBox="0 0 16 16"><path d="M.600 1.500h14.800v11.500H10.500L8 15.500 5.500 13H.600z"/></svg></button>
        </div>
    </div>
</body>
</html>
```
FILE: styles.css
```
* {
    box-sizing: border-box;
}
body {
    margin: 0;
    min-height: 100vh;
    display: flex;
    flex-direction: column;
    background: white;
    font-family: "Open Sans", "Noto Sans", sans-serif;
    color: #222;
}
svg {
    display: block;
    flex: none;
}
.sprite {
    position: absolute;
    width: 0;
    height: 0;
}
.symbols {
    display: none;
}
.mark {
    font-family: "Liberation Sans", Arial, sans-serif;
    font-weight: bold;
    text-anchor: middle;
}
.mark-serif {
    font-family: "Liberation Serif", serif;
}
.d-mark {
    font-size: 14px;
}
.ico16 {
    width: 16px;
    height: 16px;
}
.ico10 {
    width: 10px;
    height: 10px;
}
.bar button, .outer-tabs button, .tab-strip button, .downloads button, .taskbar button {
    border: none;
    padding: 0;
    background: none;
    font-family: inherit;
    display: flex;
    align-items: center;
    justify-content: center;
    flex: none;
}
.bar input, .search input {
    flex: 1;
    min-width: 0;
    border: none;
    padding: 0;
    background: none;
    outline: none;
    font-family: inherit;
}

/* toolbars */
.bar {
    display: flex;
    align-items: center;
    fill: #5a5a5a;
}
.bar-top {
    height: 42px;
    padding: 0 8px 0 4px;
    background: #f2f2f2;
}
.nav-btns {
    display: flex;
}
.nav-btns button {
    width: 32px;
    height: 28px;
}
.nav-small button {
    width: 28px;
}
.nav-btns svg {
    width: 20px;
    height: 20px;
}
.off {
    opacity: 0.4;
}
.bar .launcher {
    margin: 0 12px 0 11px;
    gap: 4px;
}
.chrome-logo {
    width: 23px;
    height: 23px;
}
.caret {
    width: 7px;
    height: 4px;
}
.address {
    flex: 1;
    height: 33px;
    display: flex;
    align-items: center;
    padding: 0 5px 2px 6px;
    border: 1px solid #a9a9a9;
    border-radius: 3px;
    background: white;
    font-size: 15px;
}
.address label {
    margin-left: 4px;
    color: #111;
}
.address input {
    font-size: 15px;
    color: #777;
}
.d-logo {
    width: 22px;
    height: 22px;
    margin: 0 10px;
}
.menu {
    width: 12px;
    height: 24px;
}
.menu svg {
    width: 4px;
    height: 16px;
}

/* outer tabs */
.outer-tabs {
    height: 29px;
    display: flex;
    align-items: flex-start;
    padding: 0 9px 0 6px;
    background: black;
    font-size: 12px;
}
.outer-tab {
    width: 205px;
    height: 28px;
    display: flex;
    align-items: center;
    gap: 6px;
    padding: 0 17px 0 16px;
    background: #f2f2f2;
    color: #444;
    clip-path: polygon(0 0, 100% 0, calc(100% - 13px) 100%, 13px 100%);
}
.outer-tab span {
    flex: 1;
}
.outer-tab button {
    color: #555;
}
.second {
    width: 200px;
    margin-left: -7px;
    padding-left: 11px;
    background: #aaa;
    color: #222;
    clip-path: polygon(7px 0, 100% 0, calc(100% - 13px) 100%, 8px 100%, 1px 50%);
}
.outer-tabs .new-tab {
    width: 32px;
    height: 15px;
    margin-top: 8px;
    background: #a9a9a9;
    clip-path: polygon(7px 0, 100% 0, calc(100% - 7px) 100%, 0 100%);
}
.outer-tabs .collapse {
    width: 14px;
    height: 28px;
    margin-left: auto;
}
.collapse svg {
    width: 12px;
    height: 10px;
}

/* inner tabs */
.tab-strip {
    height: 34px;
    display: flex;
    align-items: center;
    padding-left: 9px;
    background: #dee1e6;
    fill: #5f6368;
}
.tab-strip .tab {
    width: 31px;
    height: 20px;
    border-right: 1px solid #85888c;
}
.tab svg {
    width: 16px;
    height: 16px;
}
.tab-strip .no-line {
    border-right-color: transparent;
}
.tab.small svg {
    width: 14px;
}
.faded {
    opacity: 0.8;
    fill: #777;
}
.tab-strip .active {
    position: relative;
    height: 34px;
    border: none;
    border-radius: 8px 8px 0 0;
    background: white;
    color: #333;
}
.tab.active svg {
    width: 10px;
    height: 10px;
}
.active::before, .active::after {
    content: "";
    position: absolute;
    bottom: 0;
    width: 8px;
    height: 8px;
}
.active::before {
    right: 100%;
    background: radial-gradient(circle at 0 0, transparent 8px, white 8px);
}
.active::after {
    left: 100%;
    background: radial-gradient(circle at 100% 0, transparent 8px, white 8px);
}
.tab-strip .add-tab {
    width: 42px;
    height: 28px;
}
.add-tab svg {
    width: 12px;
    height: 12px;
}
.win-btns {
    display: flex;
    margin-left: auto;
}
.tab-strip .win-btns button {
    width: 46px;
    height: 28px;
    margin-bottom: 6px;
}
.win-btns svg {
    width: 12px;
    height: 12px;
    fill: none;
    stroke: #111;
}

/* inner toolbar */
.bar-inner {
    height: 37px;
    padding: 0 16px 0 6px;
    border-bottom: 1px solid #d9dadc;
    background: white;
    fill: #5f6368;
}
.omnibox {
    flex: 1;
    height: 28px;
    display: flex;
    align-items: center;
    margin-left: 6px;
    padding: 0 2px 0 10px;
    border-radius: 14px;
    background: #f1f3f4;
    font-size: 13px;
    color: #5f6368;
}
.secure {
    margin-left: 8px;
    padding-right: 9px;
    border-right: 1px solid #9aa0a6;
    line-height: 16px;
}
.omnibox label {
    margin-left: 9px;
    color: #222;
}
.omnibox input {
    font-size: 13px;
    color: #5f6368;
}
.omnibox button {
    width: 32px;
}
.avatar {
    margin: 0 15px 0 11px;
}
.avatar svg {
    width: 22px;
    height: 22px;
}

/* page */
.page {
    flex: 1;
    padding: 8px;
    font-family: "Liberation Serif", "Times New Roman", serif;
}
.topnav {
    background: black;
    display: flex;
}
.logout {
    padding: 14px 16px;
    border: none;
    background: none;
    color: white;
    font-family: "Liberation Sans", Arial, sans-serif;
}
h1 {
    margin: 21px 0 22px;
    background: #009879;
    color: white;
    font-size: 32px;
    line-height: 37px;
    text-align: center;
}
.monitors {
    max-width: 1204px;
    margin: 0 auto;
    padding-right: 4px;
    display: flex;
    flex-wrap: wrap;
    justify-content: center;
    gap: 4px 8px;
}
.button {
    padding: 18px 16px;
    border: 2px solid;
    border-color: #767676 #212121 #212121 #767676;
    border-radius: 24px;
    background: #4eb5f1;
    color: white;
    font-family: "Liberation Sans", Arial, sans-serif;
}
.hovered {
    background: #46a2d8;
}
.step {
    position: relative;
}
.target {
    outline: 2px solid #2980bd;
}
.callout {
    position: absolute;
    top: 72px;
    left: -167px;
    z-index: 1;
    width: 250px;
    padding: 15px 30px 13px;
    background: #2980bd;
    color: white;
    text-align: center;
    font-family: "Liberation Sans", Arial, sans-serif;
    font-size: 22px;
    line-height: 26px;
}
.callout p {
    margin: 0;
}
.pointer {
    position: absolute;
    bottom: 100%;
    left: 0;
    width: 250px;
    height: 40px;
    fill: #2980bd;
}

/* downloads */
.downloads {
    height: 57px;
    display: flex;
    align-items: center;
    padding: 0 10px 0 4px;
    border-top: 1px solid #d8d8d8;
    font-size: 12px;
    color: #444;
}
.download {
    width: 233px;
    height: 44px;
    display: flex;
    align-items: center;
    padding: 0 17px 0 16px;
    border-right: 1px solid #ccc;
}
.download span {
    flex: 1;
    margin-left: 13px;
}
.download svg {
    color: #777;
}
.download button svg {
    width: 12px;
    height: 12px;
}
.downloads .show-all {
    margin-left: auto;
    padding: 0 15px;
    height: 32px;
    border: 1px solid #dadce0;
    border-radius: 4px;
    color: #1a73e8;
    font-size: 12px;
}
.downloads .close-downloads {
    margin-left: 10px;
    color: #666;
}
.close-downloads svg {
    width: 16px;
    height: 12px;
}

/* taskbar */
.taskbar {
    height: 40px;
    display: flex;
    background: linear-gradient(to right, #cfe6ed, #d2e0ea 50%, #d6dce9);
}
.taskbar .start {
    width: 48px;
}
.start svg {
    width: 16px;
    height: 16px;
}
.search {
    width: 344px;
    display: flex;
    align-items: center;
    gap: 10px;
    padding: 0 11px;
    border: 1px solid #c4c8ca;
    background: white;
}
.search svg {
    width: 18px;
    height: 18px;
    fill: none;
    stroke: #222;
    stroke-width: 1.4;
}
.search input {
    font-size: 14px;
}
.search input::placeholder {
    color: #333;
}
.taskbar .sys {
    width: 48px;
}
.sys svg {
    width: 16px;
    height: 16px;
}
.apps {
    display: flex;
    margin-left: 2px;
}
.taskbar .app {
    width: 44px;
    padding: 0 5px 0 4px;
    background-repeat: no-repeat;
    background-position: 5px 100%;
    background-size: 35px 2px;
}
.app svg {
    width: 24px;
    height: 24px;
}
.taskbar .run {
    background-image: linear-gradient(#0078d7, #0078d7);
}
.taskbar .many {
    background-image: linear-gradient(to right, #0078d7 27px, #5fa8e4 27px);
}
.taskbar .current {
    background-color: #ecf1f6;
    background-position: 0 100%;
    background-size: 44px 2px;
}
.tray {
    display: flex;
    margin-left: auto;
    border-right: 1px solid #a9b0bb;
    margin-right: 3px;
}
.taskbar .weather {
    gap: 12px;
    margin-right: 12px;
    font-size: 13px;
    color: #222;
}
.weather svg {
    width: 18px;
    height: 18px;
}
.taskbar .tray-btn {
    width: 32px;
}
.tray-btn svg {
    width: 16px;
    height: 16px;
    fill: none;
    stroke: #111;
    stroke-width: 1.2;
}
.taskbar .clock {
    flex-direction: column;
    width: 66px;
    font-size: 11px;
    line-height: 18px;
    color: #111;
}
.taskbar .notes {
    width: 40px;
    margin-right: 7px;
}
```
